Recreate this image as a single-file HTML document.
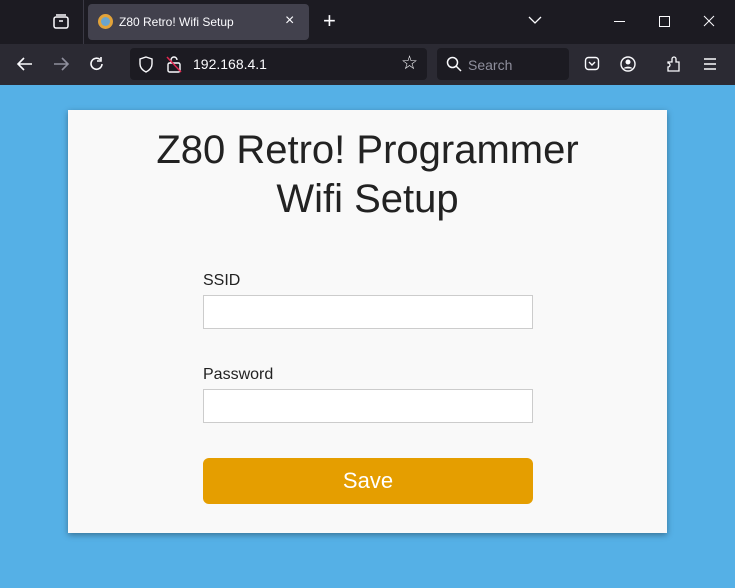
<html><head><style>
body{margin:0;width:735px;height:588px;overflow:hidden;background:#55b0e6;font-family:"Liberation Sans",sans-serif;position:relative}
.tb{position:absolute;left:0;top:0;width:735px;height:44px;background:#1c1b22}
.nav{position:absolute;left:0;top:44px;width:735px;height:41px;background:#2b2a33}
.tab{position:absolute;left:88px;top:4px;width:221px;height:36px;background:#42414d;border-radius:4px;color:#fbfbfe;font-size:12px}
.url{position:absolute;left:130px;top:48px;width:297px;height:32px;background:#1c1b22;border-radius:4px;color:#fbfbfe;font-size:14px}
.srch{position:absolute;left:437px;top:48px;width:132px;height:32px;background:#1c1b22;border-radius:4px;color:#8f8f9d;font-size:14px}
.ic{position:absolute;color:#fbfbfe}
.card{position:absolute;left:68px;top:110px;width:599px;height:423px;background:#f9f9f9;box-shadow:0 2px 6px rgba(0,0,0,.35)}
h1{margin:0;position:absolute;top:16px;left:0;width:599px;text-align:center;font-weight:normal;font-size:40px;line-height:49px;color:#222}
label{position:absolute;left:135px;font-size:16px;color:#222}
.in{position:absolute;left:135px;width:328px;height:32px;border:1px solid #ccc;background:#fff}
.btn{position:absolute;left:135px;top:348px;width:330px;height:46px;background:#e59e00;border-radius:6px;color:#fff;font-size:22px;text-align:center;line-height:46px}
</style></head><body>
<div class="tb"></div><div class="nav"></div>
<svg class="ic" style="left:52px;top:13px" width="18" height="18" viewBox="0 0 18 18" fill="none" stroke="#fbfbfe" stroke-width="1.5"><rect x="2" y="4" width="14" height="11" rx="2"/><line x1="4" y1="2" x2="14" y2="2"/><line x1="7" y1="8" x2="11" y2="8"/></svg>
<div style="position:absolute;left:83px;top:0;width:1px;height:44px;background:#3a3944"></div>
<div class="tab"><div style="position:absolute;left:10px;top:10px;width:15px;height:15px;border-radius:50%;background:#e2a33a"><div style="margin:3px;width:9px;height:9px;border-radius:50%;background:#6aa4cc"></div></div><span style="position:absolute;left:31px;top:11px">Z80 Retro! Wifi Setup</span><span style="position:absolute;left:197px;top:8px;font-size:16px">×</span></div>
<div class="ic" style="left:323px;top:8px;font-size:22px">+</div>
<svg style="position:absolute;left:528px;top:15px" width="14" height="10"><polyline points="1,2 7,8 13,2" fill="none" stroke="#fbfbfe" stroke-width="1.3"/></svg>
<div style="position:absolute;left:614px;top:21px;width:11px;height:1px;background:#fbfbfe"></div>
<div style="position:absolute;left:659px;top:16px;width:9px;height:9px;border:1px solid #fbfbfe"></div>
<svg style="position:absolute;left:703px;top:15px" width="12" height="12"><path d="M1 1L11 11M11 1L1 11" stroke="#fbfbfe" stroke-width="1"/></svg>
<svg style="position:absolute;left:16px;top:56px" width="18" height="16"><path d="M16 8H2M8 2L2 8L8 14" fill="none" stroke="#fbfbfe" stroke-width="1.6"/></svg>
<svg style="position:absolute;left:52px;top:56px" width="18" height="16"><path d="M2 8H16M10 2L16 8L10 14" fill="none" stroke="#8f8f9d" stroke-width="1.6"/></svg>
<svg style="position:absolute;left:88px;top:55px" width="18" height="18"><path d="M14 9A5.5 5.5 0 1 1 12 4.5M13 2V6H9" fill="none" stroke="#fbfbfe" stroke-width="1.6"/></svg>
<div class="url"><svg style="position:absolute;left:8px;top:8px" width="16" height="17"><path d="M8 1L14 3V8C14 12 11 14.5 8 16C5 14.5 2 12 2 8V3Z" fill="none" stroke="#fbfbfe" stroke-width="1.4"/></svg><svg style="position:absolute;left:36px;top:7px" width="16" height="18"><rect x="2" y="8" width="12" height="9" rx="1.5" fill="none" stroke="#fbfbfe" stroke-width="1.4"/><path d="M5 8V5a3 3 0 0 1 6 0" fill="none" stroke="#fbfbfe" stroke-width="1.4"/><line x1="1" y1="2" x2="15" y2="17" stroke="#e22850" stroke-width="1.5"/></svg><span style="position:absolute;left:63px;top:8px">192.168.4.1</span><span style="position:absolute;left:271px;top:4px;font-size:19px">☆</span></div>
<div class="srch"><svg style="position:absolute;left:9px;top:8px" width="16" height="16"><circle cx="6.5" cy="6.5" r="5" fill="none" stroke="#fbfbfe" stroke-width="1.5"/><line x1="10" y1="10" x2="15" y2="15" stroke="#fbfbfe" stroke-width="1.5"/></svg><span style="position:absolute;left:31px;top:9px">Search</span></div>
<svg style="position:absolute;left:584px;top:56px" width="16" height="16"><rect x="1.5" y="1.5" width="13" height="12" rx="3" fill="none" stroke="#fbfbfe" stroke-width="1.4"/><polyline points="5,6 8,9 11,6" fill="none" stroke="#fbfbfe" stroke-width="1.4"/></svg>
<svg style="position:absolute;left:620px;top:56px" width="16" height="16"><circle cx="8" cy="8" r="7" fill="none" stroke="#fbfbfe" stroke-width="1.4"/><circle cx="8" cy="6" r="2.5" fill="#fbfbfe"/><path d="M3.5 12.5C5 10 11 10 12.5 12.5" fill="#fbfbfe"/></svg>
<svg style="position:absolute;left:666px;top:56px" width="16" height="17"><path d="M2 6H6V3A2 2 0 0 1 10 3V6H13V15H2V11A2 2 0 0 0 2 7Z" fill="none" stroke="#fbfbfe" stroke-width="1.3"/></svg>
<svg style="position:absolute;left:703px;top:58px" width="14" height="12"><path d="M1 1H13M1 6H13M1 11H13" stroke="#fbfbfe" stroke-width="1.4"/></svg>
<div class="card">
<h1>Z80 Retro! Programmer<br>Wifi Setup</h1>
<label style="top:162px">SSID</label><div class="in" style="top:185px"></div>
<label style="top:256px">Password</label><div class="in" style="top:279px"></div>
<div class="btn">Save</div>
</div>
</body></html>
